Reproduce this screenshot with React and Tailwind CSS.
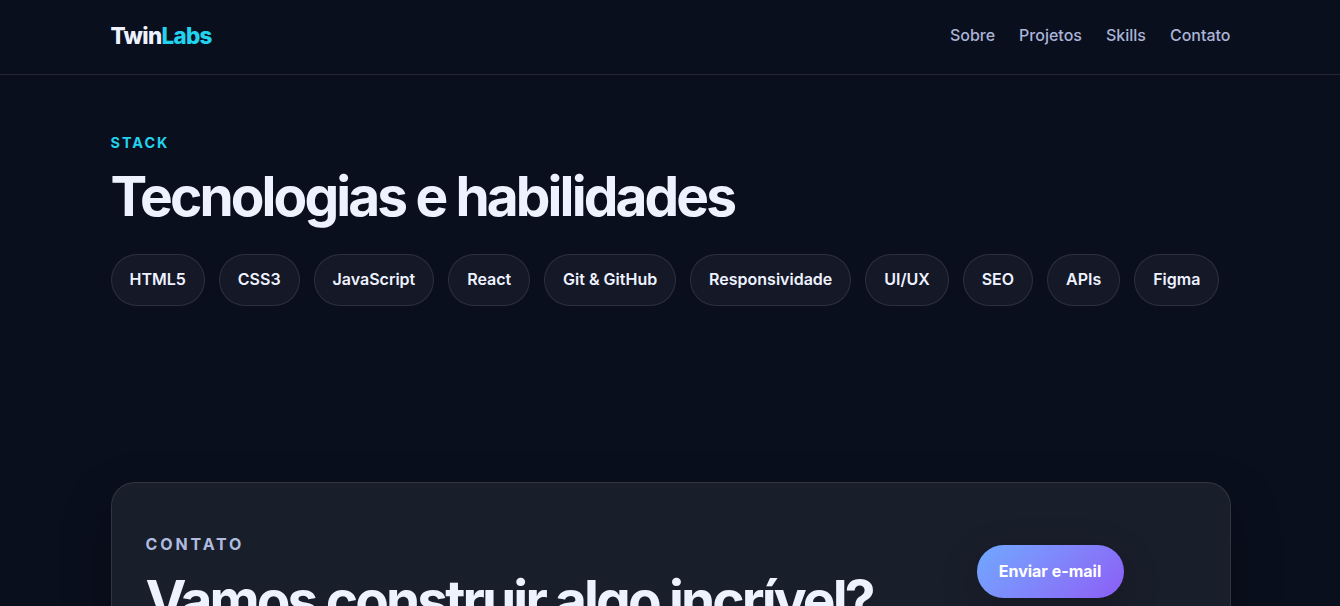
import React from 'react';

const navLinks = ['Sobre', 'Projetos', 'Skills', 'Contato'];

const skills = [
  'HTML5',
  'CSS3',
  'JavaScript',
  'React',
  'Git & GitHub',
  'Responsividade',
  'UI/UX',
  'SEO',
  'APIs',
  'Figma',
];

const Header = () => (
  <header className="h-[75px] border-b border-white/10 pl-px">
    <div className="mx-auto flex h-[71px] w-[1120px] items-center justify-between">
      <a href="#top" className="text-[22.4px] font-extrabold tracking-[-0.03em]">
        Twin<span className="text-[#22d3ee]">Labs</span>
      </a>
      <nav className="flex gap-6 pb-0.5 font-medium text-[#aab4d6]">
        {navLinks.map((link) => (
          <a key={link} href={`#${link.toLowerCase()}`}>
            {link}
          </a>
        ))}
      </nav>
    </div>
  </header>
);

const Skills = () => (
  <section id="skills" className="mx-auto w-[1120px] pt-[56px]">
    <p className="text-[14.4px] leading-6 font-bold tracking-[0.14em] text-[#22d3ee]">STACK</p>
    <h2 className="mt-[11px] text-[55px] leading-[60px] font-bold tracking-[-0.0525em]">
      Tecnologias e habilidades
    </h2>
    <div className="mt-7 flex gap-[13.95px]">
      {skills.map((skill) => (
        <span
          key={skill}
          className="flex h-[52px] items-center rounded-full border border-white/10 bg-[#151827] px-[18px] pb-0.5 font-semibold whitespace-nowrap"
        >
          {skill}
        </span>
      ))}
    </div>
  </section>
);

const Contact = () => (
  <section id="contato" className="mx-auto mt-[176px] w-[1120px]">
    <div className="flex h-[240px] items-start justify-between rounded-3xl border border-white/10 bg-[#191e2b] px-[34px] shadow-[0_20px_50px_rgba(0,0,0,0.3)]">
      <div className="pt-[48px]">
        <p className="leading-[26px] font-bold tracking-[0.18em] text-[#b0bcdf]">CONTATO</p>
        <h2 className="mt-[13px] text-[55px] leading-[60px] font-bold tracking-[-0.0525em]">
          Vamos construir algo incrível?
        </h2>
      </div>
      <a
        href="#email"
        className="mt-[62px] mr-[72px] flex h-[53px] w-[147px] items-center justify-center rounded-full bg-linear-135 from-[#6ea8fe] to-[#8b5cf6] pb-0.5 font-bold text-white shadow-[0_12px_40px_rgba(0,0,0,0.2)]"
      >
        Enviar e-mail
      </a>
    </div>
  </section>
);

const App = () => (
  <div className="h-screen overflow-hidden bg-[#0a0f1e] font-['Inter',sans-serif] text-base text-[#eef2ff]">
    <Header />
    <main className="pl-px">
      <Skills />
      <Contact />
    </main>
  </div>
);

export default App;
